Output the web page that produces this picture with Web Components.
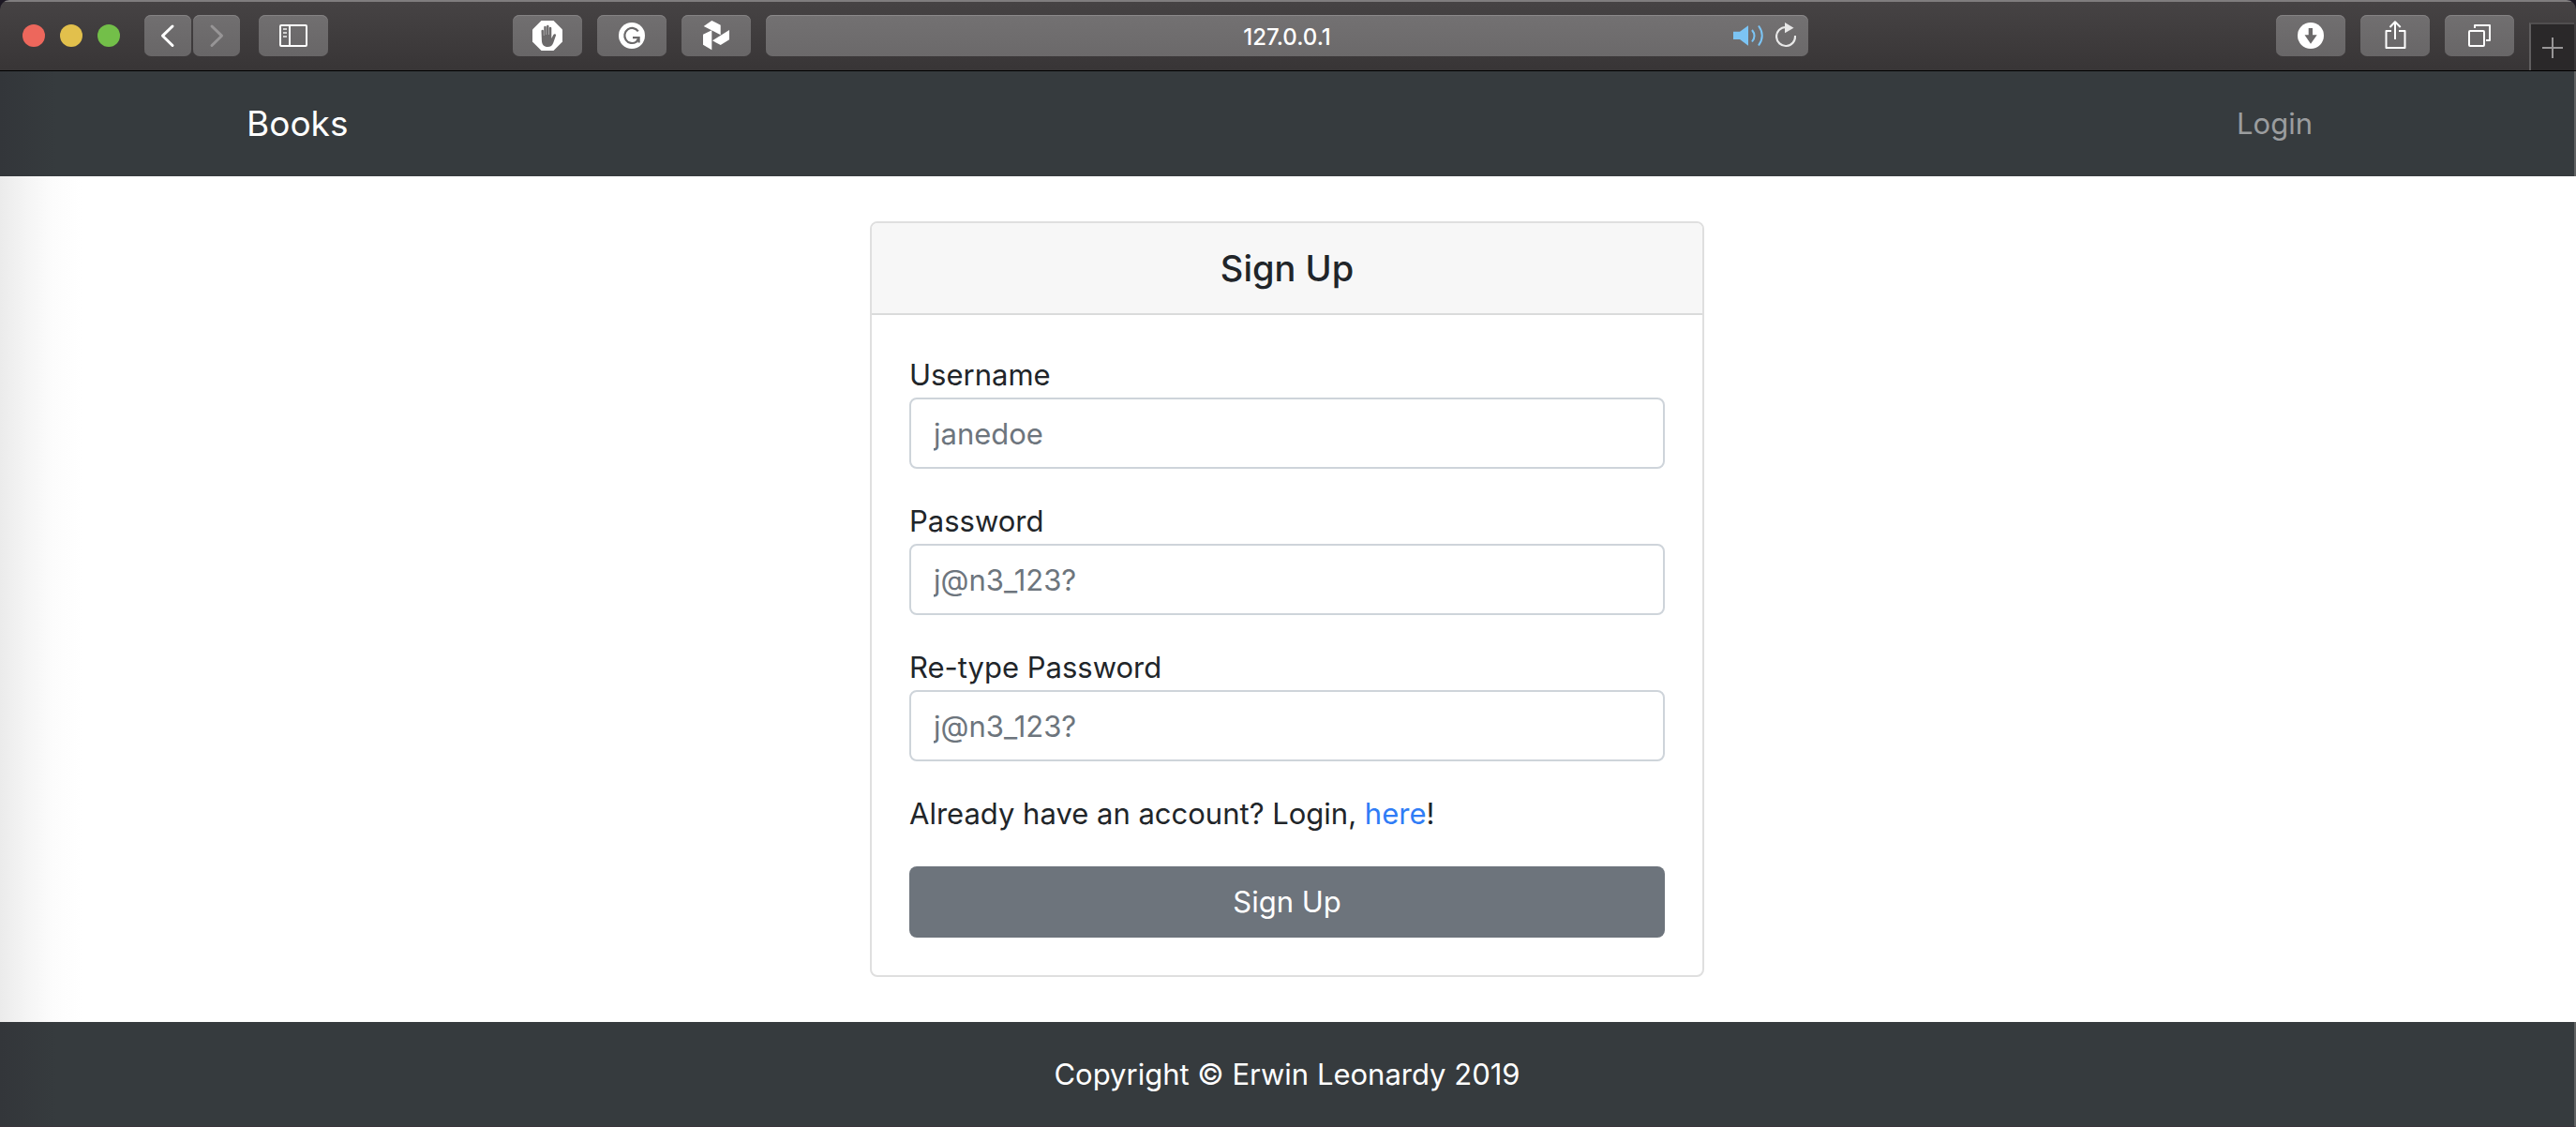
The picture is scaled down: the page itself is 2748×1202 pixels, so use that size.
<!DOCTYPE html>
<html lang="en">
<head>
<meta charset="utf-8">
<meta name="viewport" content="width=device-width, initial-scale=1">
<title>Books - Sign Up</title>
<style>
  html, body { margin: 0; min-height: 100%; }
  body {
    background: #1c1823;
    font-family: Inter, "Liberation Sans", sans-serif;
    font-size: 31px;
    line-height: 48px;
    color: #212529;
  }
</style>
</head>
<body>
<browser-window>
  <browser-toolbar slot="toolbar" address="127.0.0.1"></browser-toolbar>
  <site-nav><span slot="brand">Books</span><span slot="link">Login</span></site-nav>
  <site-main>
    <form-card heading="Sign Up">
      <form-field label="Username" type="text" hint="janedoe"></form-field>
      <form-field label="Password" type="password" hint="j@n3_123?"></form-field>
      <form-field label="Re-type Password" type="password" hint="j@n3_123?"></form-field>
      <login-hint></login-hint>
      <submit-button>Sign Up</submit-button>
    </form-card>
  </site-main>
  <site-footer>Copyright © Erwin Leonardy 2019</site-footer>
</browser-window>

<script>
const define = (name, render) => customElements.define(name, class extends HTMLElement {
  connectedCallback() {
    if (this.shadowRoot) return;
    this.attachShadow({ mode: 'open' }).innerHTML = '<style>*{box-sizing:border-box}</style>' + render(this);
  }
});

const icons = {
  back: '<path d="M30 12 19.5 22.2 30 32.5" fill="none" stroke="#fff" stroke-width="3" stroke-linecap="round" stroke-linejoin="round"/>',
  forward: '<path d="M20 12 30.5 22.2 20 32.5" fill="none" stroke="#979596" stroke-width="3" stroke-linecap="round" stroke-linejoin="round"/>',
  sidebar: '<g fill="none" stroke="#fff" stroke-width="2"><rect x="23" y="11" width="28" height="22" rx="1"/><path d="M33 11v22"/><path d="M26 15h4M26 19h4M26 23h4" stroke="#d0cfcf"/></g>',
  block: '<path d="M30.500 6h13L53 15.500v13L43.500 38h-13L21 28.500v-13z" fill="#fff"/><path d="M30.500 17a1.200 1.200 0 0 1 2.400 0v5h.4v-9a1.200 1.200 0 0 1 2.400 0v8h.4V12a1.200 1.200 0 0 1 2.400 0v9h.4v-7a1.200 1.200 0 0 1 2.400 0v11l2.100-4c.8-1.400 3-.9 2.600.8l-2.700 7.700c-1 3-2.900 4.500-6 4.500-4 0-6.400-2.500-6.400-7z" fill="#6b696a"/>',
  grammar: '<circle cx="37" cy="22" r="14" fill="#fff"/><path d="M43.800 17.300A8 8 0 1 0 41.800 28.600L44.600 24.600M38 24.200H44.600V29.500" fill="none" stroke="#6b696a" stroke-width="2.200"/>',
  pinwheel: '<path d="M23.700 12 32.300 6l9.400 4.700v10.600zM23 20.700l9.300-4.400v21L23 31.700zM51 16v10.300L41.700 32 33 27.300z" fill="#fff"/>',
  speaker: '<path d="M0 17.700h7l9-6.400v21.400L7 26H0z" fill="#7cc4f4"/><path d="M20 16Q25 22.200 20 28.500M27 11.500Q34.500 22 27 32.500" fill="none" stroke="#7cc4f4" stroke-width="2"/>',
  reload: '<path d="M11 13A10 10 0 1 0 21 22" fill="none" stroke="#e8e8e8" stroke-width="2.200"/><path d="M10 8l9.500 5.700L10 19.300z" fill="#e8e8e8"/>',
  download: '<circle cx="37" cy="22" r="14" fill="#fff"/><path d="M34.700 14H39v7.300h4.700L37 30.700l-6.500-9.400h4.200z" fill="#6b696a"/>',
  share: '<path d="M33 17h-5.500v18h20V17H41M37 26V8M31.500 13 37 7.300 42.700 13" fill="none" stroke="#fff" stroke-width="2" stroke-linejoin="round"/>',
  tabs: '<g fill="none" stroke="#fff" stroke-width="2" stroke-linejoin="round"><rect x="26" y="17" width="16" height="16" rx="1"/><path d="M32 14v-3h16v16h-4"/></g>'
};

define('browser-window', () => `
  <style>
    :host { display: flex; flex-direction: column; min-height: 100vh; border-radius: 10px 10px 0 0; overflow: hidden; }
  </style>
  <slot name="toolbar"></slot><slot></slot>`);

define('tool-button', el => {
  const width = el.getAttribute('width') || 74;
  return `
  <style>
    :host { display: block; flex: none; }
    button { display: block; height: 44px; padding: 0; border: 0; border-radius: 7px;
      background: linear-gradient(#716f70, #686667); box-shadow: inset 0 1px #858384; }
    :host([plain]) button { background: none; box-shadow: none; }
    svg { display: block; }
  </style>
  <button aria-label="${el.getAttribute('icon')}"><svg width="${width}" height="44" viewBox="0 0 ${width} 44">${icons[el.getAttribute('icon')]}</svg></button>`;
});

define('browser-toolbar', el => `
  <style>
    :host { display: grid; grid-template-columns: 1fr minmax(0, 1112px) 1fr; height: 76px;
      align-items: start; padding: 14px 2px 0 0; box-sizing: border-box;
      border-top: 2px solid #7f7d7e; border-bottom: 1px solid #000;
      background: linear-gradient(#464344, #383536); }
    .side { display: flex; align-items: flex-start; gap: 16px; }
    .left { padding: 0 16px 0 24px; justify-content: space-between; }
    .right { justify-content: flex-end; }
    .group, .lights, .pair { display: flex; align-items: center; }
    .group { gap: 20px; }
    .lights { gap: 16px; padding-right: 6px; }
    .ext { gap: 16px; }
    .pair { gap: 2px; }
    i { width: 24px; height: 24px; border-radius: 50%; background: var(--c); }
    .address { display: grid; height: 44px; border-radius: 7px;
      background: linear-gradient(#737172, #6b696a); box-shadow: inset 0 1px #8b898a; }
    .address > * { grid-area: 1 / 1; }
    input { min-width: 0; height: 46px; padding: 0; border: 0; background: none; color: #fff;
      font: 500 24px Inter, sans-serif; text-align: center; }
    .status { display: flex; gap: 13px; padding-right: 13px; justify-self: end; }
    .new { width: 48px; height: 51px; margin-top: 8px; padding: 0; border: 0;
      border-left: 2px solid #605e5f; border-top: 2px solid #504e4f;
      background: #2a2829; flex: none; }
    .new svg { display: block; }
  </style>
  <div class="side left">
    <div class="group">
      <div class="lights"><i style="--c:#ed675c"></i><i style="--c:#e2c04c"></i><i style="--c:#73bf49"></i></div>
      <div class="pair"><tool-button icon="back" width="50"></tool-button><tool-button icon="forward" width="50"></tool-button></div>
      <tool-button icon="sidebar"></tool-button>
    </div>
    <div class="group ext">
      <tool-button icon="block"></tool-button><tool-button icon="grammar"></tool-button><tool-button icon="pinwheel"></tool-button>
    </div>
  </div>
  <div class="address">
    <input type="text" aria-label="Address" value="${el.getAttribute('address')}">
    <div class="status"><tool-button plain icon="speaker" width="32"></tool-button><tool-button plain icon="reload" width="22"></tool-button></div>
  </div>
  <div class="side right">
    <tool-button icon="download"></tool-button><tool-button icon="share"></tool-button><tool-button icon="tabs"></tool-button>
    <button class="new" aria-label="New tab"><svg width="46" height="49" viewBox="0 0 46 49"><path d="M12 25h22M23 14v22" stroke="#989697" stroke-width="2"/></svg></button>
  </div>`);

define('site-nav', () => `
  <style>
    :host { display: block; border-right: 2px solid #606263; background: linear-gradient(90deg, #33363a, #363b3e 60px); }
    nav { display: flex; justify-content: space-between; align-items: center; box-sizing: border-box;
      max-width: 2280px; height: 112px; margin: 0 auto; padding: 0 46px 0 30px; }
    a { color: #9b9d9f; text-decoration: none; }
    .brand { color: #fff; font-size: 37px; }
  </style>
  <nav><a class="brand" href="#"><slot name="brand"></slot></a><a href="#login"><slot name="link"></slot></a></nav>`);

define('site-main', () => `
  <style>
    :host { display: block; flex: 1; padding: 48px 2px 48px 0;
      background: linear-gradient(90deg, #ebebeb, #f5f5f5 30px, #fcfcfc 56px, #fff 88px); }
  </style>
  <slot></slot>`);

define('form-card', el => `
  <style>
    :host { display: block; max-width: 890px; margin: 0 auto; }
    section { border: 2px solid #dfdfdf; border-radius: 8px; background: #fff; overflow: hidden; }
    h1 { margin: 0; padding: 24px; border-bottom: 2px solid #dadbdb; background: #f7f7f7;
      font-size: 38px; font-weight: 500; line-height: 48px; text-align: center; }
    form { display: flex; flex-direction: column; gap: 32px; padding: 40px; }
  </style>
  <section><h1>${el.getAttribute('heading')}</h1><form><slot></slot></form></section>`);

define('form-field', el => `
  <style>
    :host { display: block; }
    label { display: block; }
    input { display: block; width: 100%; height: 76px; padding: 0 24px; border: 2px solid #ced4da;
      border-radius: 8px; background: #fff; color: #495057; font: inherit; }
    input::placeholder { color: #6d757d; opacity: 1; }
  </style>
  <label for="field">${el.getAttribute('label')}</label>
  <input id="field" type="${el.getAttribute('type')}" placeholder="${el.getAttribute('hint')}">`);

define('login-hint', () => `
  <style>
    :host { display: block; }
    p { margin: 0; }
    a { color: #2f7cf6; text-decoration: none; }
  </style>
  <p>Already have an account? Login, <a href="#login">here</a>!</p>`);

define('submit-button', () => `
  <style>
    :host { display: block; }
    button { display: block; width: 100%; height: 76px; border: 0; border-radius: 8px;
      background: #6d747c; color: #fff; font: inherit; }
  </style>
  <button type="submit"><slot></slot></button>`);

define('site-footer', () => `
  <style>
    :host { display: block; border-right: 2px solid #606263; border-bottom: 1px solid #39343b;
      background: linear-gradient(90deg, #33363a, #363b3e 60px); }
    footer { padding: 32px 32px 31px; color: #fff; text-align: center; }
  </style>
  <footer><slot></slot></footer>`);
</script>
</body>
</html>
